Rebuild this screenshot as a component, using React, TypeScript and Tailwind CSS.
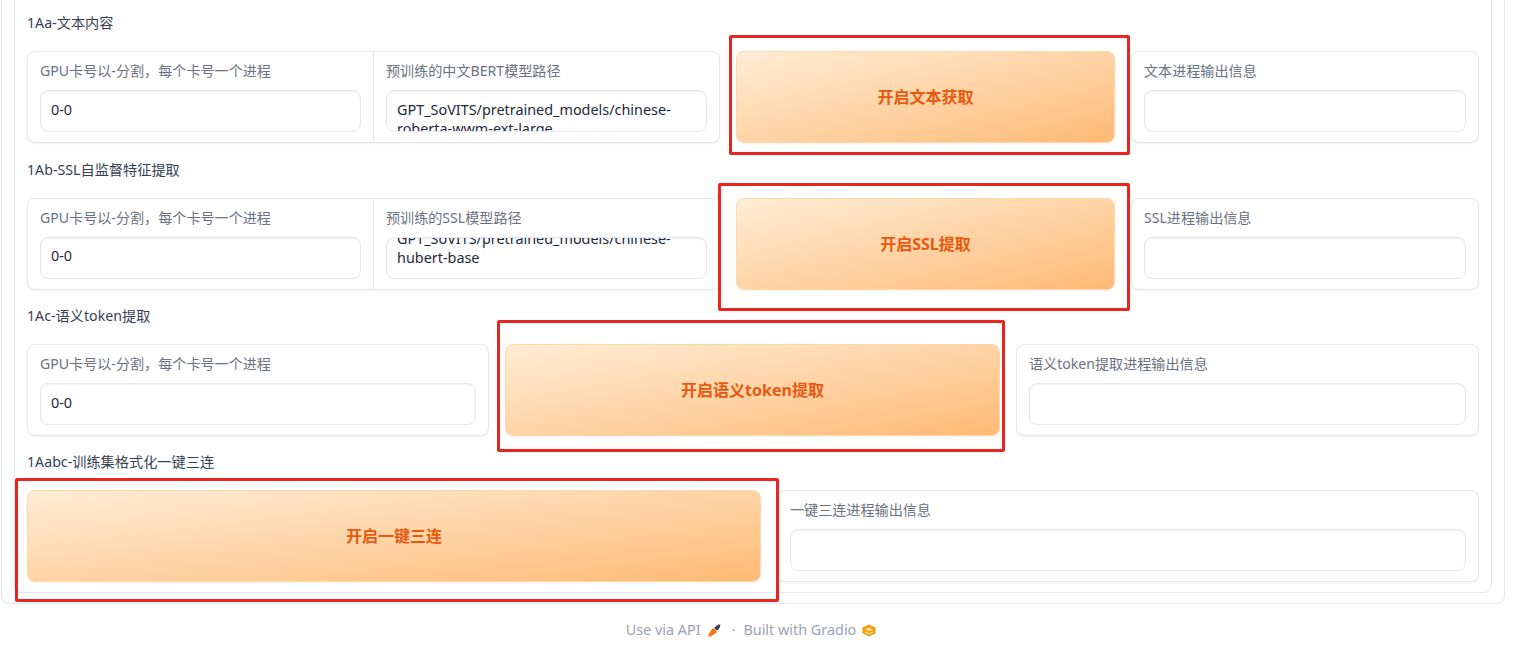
const cjk = "font-['Noto_Sans','Noto_Sans_CJK_SC',sans-serif]";

function Field({ label, value, bottom }: { label: string; value?: string; bottom?: boolean }) {
  return (
    <div className="flex-1 min-w-0 h-full px-[12px] pt-[8px]">
      <div className="text-[14.1px] leading-[21px] text-[#6b7280] whitespace-nowrap">{label}</div>
      <div
        className={`mt-[9px] h-[41.6px] overflow-hidden rounded-lg border border-[#e5e7eb] bg-white px-[10px] text-[14.4px] leading-[19px] text-[#1f2937] shadow-[inset_0_1px_2px_rgba(0,0,0,0.06)] flex flex-col ${
          bottom ? "justify-end pb-[11px]" : "pt-[8.5px]"
        }`}
      >
        {value && <div className="break-words shrink-0">{value}</div>}
      </div>
    </div>
  );
}

function Card({ className, children }: { className: string; children: React.ReactNode }) {
  return (
    <div className={`flex shrink-0 rounded-lg border border-[#e5e7eb] bg-white shadow-[0_1px_2px_rgba(0,0,0,0.05)] ${className}`}>
      {children}
    </div>
  );
}

function Action({ className, text }: { className: string; text: string }) {
  return (
    <button className={`shrink-0 rounded-lg border border-[#fed7aa] bg-gradient-to-br from-[#ffedd5] to-[#fdba74] text-[16px] font-bold text-[#e8590f] shadow-[0_1px_2px_rgba(0,0,0,0.05)] ${className}`}>
      {text}
    </button>
  );
}

function Heading({ text }: { text: string }) {
  return <div className="h-[20px] text-[14.2px] leading-[20px] text-[#374151]">{text}</div>;
}

function Row({ first, children }: { first?: boolean; children: React.ReactNode }) {
  return <div className={`flex gap-4 h-[91.6px] mt-[18px] ${first ? "mb-[17.4px]" : "mb-[16.6px]"}`}>{children}</div>;
}

function Mark({ className }: { className: string }) {
  return <div className={`absolute rounded-[2px] border-[3px] border-[#e8251f] pointer-events-none ${className}`} />;
}

export default function App() {
  return (
    <div className={`relative h-[654px] w-[1537px] overflow-hidden bg-white ${cjk}`}>
      <div className="ml-px w-[1504px] h-[604px] rounded-b-lg border border-t-0 border-[#e5e7eb] px-[12px] pb-[10px]">
        <div className="h-[593px] rounded-b-lg border border-t-0 border-[#e5e7eb] px-[12px] pt-[13px]">
          <Heading text="1Aa-文本内容" />
          <Row first>
            <Card className="w-[693px]">
              <Field label="GPU卡号以-分割，每个卡号一个进程" value="0-0" />
              <div className="w-px bg-[#e5e7eb]" />
              <Field label="预训练的中文BERT模型路径" value="GPT_SoVITS/pretrained_models/chinese-roberta-wwm-ext-large" />
            </Card>
            <Action className="w-[379px]" text="开启文本获取" />
            <Card className="w-[348px]"><Field label="文本进程输出信息" /></Card>
          </Row>
          <Heading text="1Ab-SSL自监督特征提取" />
          <Row>
            <Card className="w-[693px]">
              <Field label="GPU卡号以-分割，每个卡号一个进程" value="0-0" />
              <div className="w-px bg-[#e5e7eb]" />
              <Field label="预训练的SSL模型路径" bottom value="GPT_SoVITS/pretrained_models/chinese-hubert-base" />
            </Card>
            <Action className="w-[379px]" text="开启SSL提取" />
            <Card className="w-[348px]"><Field label="SSL进程输出信息" /></Card>
          </Row>
          <Heading text="1Ac-语义token提取" />
          <Row>
            <Card className="w-[462px]"><Field label="GPU卡号以-分割，每个卡号一个进程" value="0-0" /></Card>
            <Action className="w-[495px]" text="开启语义token提取" />
            <Card className="w-[463px]"><Field label="语义token提取进程输出信息" /></Card>
          </Row>
          <Heading text="1Aabc-训练集格式化一键三连" />
          <Row>
            <Action className="w-[734px]" text="开启一键三连" />
            <Card className="w-[702px]"><Field label="一键三连进程输出信息" /></Card>
          </Row>
        </div>
      </div>
      <div className="mt-[16px] flex items-center justify-center w-[1502px] h-[20px] text-[14.4px] text-[#9ca3af]">
        <span>Use via API</span>
        <svg className="ml-[7px]" width="13" height="13" viewBox="0 0 13 13">
          <path d="M7 3 L10 .8 L12.4 .4 L12 3 L10 6 L8.5 6.5 L6.5 4.5 Z" fill="#374151" />
          <path d="M4.5 4.2 L6.2 4.8 L8.2 6.8 L8.6 8.6 L5.8 10.4 L2.8 12.6 L.6 12.4 L.6 10 L2.6 7 Z" fill="#f97316" />
        </svg>
        <span className="ml-[11px] mr-[8px]">·</span>
        <span>Built with Gradio</span>
        <svg className="ml-[6px]" width="14" height="13" viewBox="0 0 14 13">
          <path d="M7 .4 13.6 3.6V9.2L7 12.6 .4 9.2V3.6Z" fill="#f59e0b" />
          <path d="M3.4 5.4 7 3.6 10.6 5.4 7 7.2Z" fill="#fff" fillOpacity=".7" />
          <path d="M3 8 7 10 11 8" fill="none" stroke="#fff" strokeOpacity=".7" strokeWidth="1.1" />
        </svg>
      </div>
      <Mark className="left-[729px] top-[35px] w-[401px] h-[120px]" />
      <Mark className="left-[718px] top-[183px] w-[412px] h-[128px]" />
      <Mark className="left-[497px] top-[320px] w-[508px] h-[132px]" />
      <Mark className="left-[15px] top-[478px] w-[764px] h-[124px]" />
    </div>
  );
}
